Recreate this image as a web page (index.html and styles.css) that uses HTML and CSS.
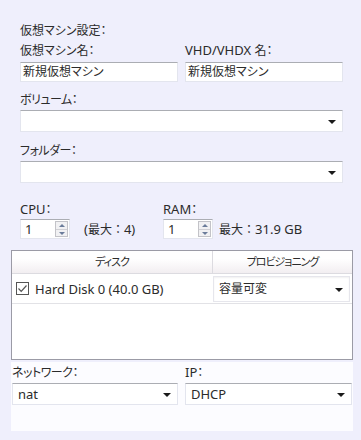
FILE: index.html
```html
<!DOCTYPE html>
<html lang="ja">
<head>
    <meta charset="UTF-8">
    <title>仮想マシン設定</title>
    <link rel="stylesheet" href="styles.css">
</head>
<body>
    <div class="panel">
        <div class="form">
            <div class="section-title">仮想マシン設定：</div>

            <div class="pair">
                <div class="field">
                    <div class="label">仮想マシン名：</div>
                    <div class="textbox">新規仮想マシン</div>
                </div>
                <div class="field">
                    <div class="label"><span class="lat">VHD/VHDX </span>名：</div>
                    <div class="textbox">新規仮想マシン</div>
                </div>
            </div>

            <div class="label label-volume">ボリューム：</div>
            <div class="select"><span class="select-value"></span><span class="arrow"></span></div>

            <div class="label label-folder">フォルダー：</div>
            <div class="select"><span class="select-value"></span><span class="arrow"></span></div>

            <div class="specs">
                <div class="spec spec-cpu">
                    <div class="label"><span class="lat">CPU</span>：</div>
                    <div class="spec-line">
                        <div class="spinner">
                            <span class="spinner-value lat">1</span>
                            <span class="spinner-btns">
                                <span class="spin-up"></span>
                                <span class="spin-down"></span>
                            </span>
                        </div>
                        <span class="spec-note note-cpu"><span class="lat">(</span>最大<span class="fw">：</span><span class="lat">4)</span></span>
                    </div>
                </div>
                <div class="spec">
                    <div class="label"><span class="lat">RAM</span>：</div>
                    <div class="spec-line">
                        <div class="spinner">
                            <span class="spinner-value lat">1</span>
                            <span class="spinner-btns">
                                <span class="spin-up"></span>
                                <span class="spin-down"></span>
                            </span>
                        </div>
                        <span class="spec-note">最大<span class="fw">：</span><span class="lat">31.9 GB</span></span>
                    </div>
                </div>
            </div>
        </div>

        <div class="disk-table">
            <div class="disk-head">
                <div class="col-disk">ディスク</div>
                <div class="col-prov">プロビジョニング</div>
            </div>
            <div class="disk-row">
                <div class="col-disk cell-disk">
                    <span class="checkbox">
                        <svg width="11" height="11" viewBox="0 0 11 11" fill="none">
                            <path d="M1.5 5.5L4.2 8.3L9.5 2.5" stroke="#555" stroke-width="1.2"/>
                        </svg>
                    </span>
                    <span class="lat">Hard Disk 0 (40.0 GB)</span>
                </div>
                <div class="col-prov cell-prov">
                    <div class="select select-cell"><span class="select-value">容量可変</span><span class="arrow"></span></div>
                </div>
            </div>
        </div>

        <div class="network">
            <div class="net-field net-left">
                <div class="label label-net">ネットワーク：</div>
                <div class="select"><span class="select-value lat">nat</span><span class="arrow"></span></div>
            </div>
            <div class="net-field net-right">
                <div class="label"><span class="lat">IP</span>：</div>
                <div class="select"><span class="select-value lat">DHCP</span><span class="arrow"></span></div>
            </div>
        </div>
    </div>
</body>
</html>
```

FILE: styles.css
```css
* {
    margin: 0;
    padding: 0;
    box-sizing: border-box;
}

body {
    font-family: "Noto Sans", "Noto Sans CJK JP", sans-serif;
    font-size: 12px;
    font-feature-settings: "palt";
    color: #2b2b2b;
    background: #efeffc;
    width: 361px;
    height: 440px;
    overflow: hidden;
}

/* latin runs are set a touch larger, like the UI font in the dialog */
.lat {
    font-size: 13px;
}

/* full-width colon where text follows it */
.fw {
    font-feature-settings: normal;
}

.panel {
    padding: 20px 8px 0 11px;
}

.form {
    padding: 0 10px 0 9px;
}

.label,
.section-title {
    height: 16px;
    line-height: 21px;
    white-space: nowrap;
}

.section-title {
    line-height: 22px;
}

.label-volume,
.label-folder,
.label-net {
    letter-spacing: -0.5px;
}

.pair {
    display: flex;
    gap: 7px;
    margin-top: 4px;
}

.field {
    width: 158px;
}

.textbox {
    margin-top: 6px;
    height: 20px;
    line-height: 18px;
    padding: 0 2px;
    background: #ffffff;
    border: 1px solid #e3e5ee;
    border-top-color: #abadb3;
    white-space: nowrap;
}

.label-volume {
    margin-top: 7px;
}

.label-folder {
    margin-top: 8px;
}

.select {
    position: relative;
    margin-top: 5px;
    height: 22px;
    line-height: 20px;
    padding: 0 20px 0 5px;
    background: #ffffff;
    border: 1px solid #e3e5ee;
    border-top-color: #abadb3;
}

.arrow {
    position: absolute;
    right: 6px;
    top: 9px;
    width: 0;
    height: 0;
    border-left: 4px solid transparent;
    border-right: 4px solid transparent;
    border-top: 4px solid #1a1a1a;
}

.specs {
    display: flex;
    margin-top: 16px;
}

.spec-cpu {
    width: 143px;
}

.spec-line {
    display: flex;
    align-items: center;
    margin-top: 4px;
}

.spinner {
    display: flex;
    align-items: center;
    justify-content: space-between;
    width: 50px;
    height: 20px;
    padding: 0 1px 0 4px;
    background: #ffffff;
    border: 1px solid #e3e5ee;
    border-top-color: #abadb3;
}

.spinner-value {
    line-height: 18px;
}

.spinner-btns {
    display: flex;
    flex-direction: column;
    width: 13px;
    height: 16px;
    border: 1px solid #c3c3c8;
    background: #f1f1f3;
}

.spin-up,
.spin-down {
    position: relative;
    flex: 1;
}

.spin-up {
    border-bottom: 1px solid #d0d0d5;
}

.spin-up::after,
.spin-down::after {
    content: "";
    position: absolute;
    left: 3px;
    width: 0;
    height: 0;
    border-left: 3px solid transparent;
    border-right: 3px solid transparent;
}

.spin-up::after {
    top: 2px;
    border-bottom: 3px solid #6b7c9a;
}

.spin-down::after {
    top: 2px;
    border-top: 3px solid #6b7c9a;
}

.spec-note {
    margin-left: 6px;
    white-space: nowrap;
}

.note-cpu {
    margin-left: 14px;
}

.disk-table {
    margin-top: 11px;
    width: 342px;
    height: 110px;
    background: #ffffff;
    border: 1px solid #9b9ba6;
}

.disk-head {
    display: flex;
    height: 23px;
    line-height: 21px;
    font-size: 11px;
    letter-spacing: -1px;
    background: linear-gradient(180deg, #ffffff 0%, #ffffff 35%, #f2eef1 100%);
    border-bottom: 1px solid #dcdbe0;
}

.col-disk {
    width: 200px;
    text-align: center;
}

.col-prov {
    flex: 1;
    text-align: center;
}

.disk-head .col-prov {
    border-left: 1px solid #dcdbe0;
}

.disk-row {
    display: flex;
    height: 30px;
    border-bottom: 1px solid #e2e2e6;
}

.cell-disk {
    display: flex;
    align-items: center;
    gap: 6px;
    padding-left: 4px;
    text-align: left;
}

.checkbox {
    display: flex;
    align-items: center;
    justify-content: center;
    width: 13px;
    height: 13px;
    border: 1px solid #555555;
    background: #ffffff;
}

.cell-prov {
    padding: 2px 2px 0 1px;
    text-align: left;
}

.select-cell {
    margin-top: 0;
    height: 26px;
    line-height: 24px;
    border-color: #e6e6ec;
    box-shadow: inset 0 1px 2px rgba(0, 0, 0, 0.06);
}

.select-cell .arrow {
    top: 11px;
}

.network {
    display: flex;
    gap: 7px;
    width: 342px;
    height: 69px;
    margin-top: 2px;
    padding: 0 1px;
    background: #fcfcff;
}

.net-left {
    width: 166px;
}

.net-right {
    flex: 1;
}
```
